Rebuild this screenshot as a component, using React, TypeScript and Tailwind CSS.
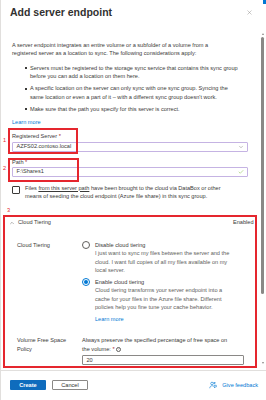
import { Check, ChevronDown, ChevronUp, X } from "lucide-react";

function RadioOption({
  checked,
  title,
  lines,
}: {
  checked?: boolean;
  title: string;
  lines: string[];
}) {
  return (
    <div className="flex gap-[5px]">
      <div
        className={
          checked
            ? "mt-[0.5px] w-[8px] h-[8px] shrink-0 rounded-full border border-[#0078d4] flex items-center justify-center"
            : "mt-[0.5px] w-[8px] h-[8px] shrink-0 rounded-full border border-[#605e5c]"
        }
      >
        {checked && <div className="w-[4px] h-[4px] rounded-full bg-[#0078d4]" />}
      </div>
      <div>
        <div>{title}</div>
        <div className="text-[#605e5c]">
          {lines.map((l, i) => (
            <div key={i}>{l}</div>
          ))}
        </div>
      </div>
    </div>
  );
}

export default function App() {
  return (
    <div className="relative w-[266px] h-[400px] bg-white border-l border-[#e1dfdd] font-['Liberation_Sans',sans-serif] text-[#3b3a39] text-[5.6px] leading-[8.5px] flex flex-col overflow-hidden">
      {/* bit of the portal edge */}
      <div className="absolute right-0 top-0 w-[3px] h-[4px] bg-[#0078d4]" />

      {/* Header */}
      <div className="h-[24px] shrink-0 flex items-start justify-between pl-[9px] pr-[13px] pt-[5px]">
        <h1 className="text-[10.5px] leading-[14px] font-semibold text-[#323130]">Add server endpoint</h1>
        <X className="w-[7px] h-[7px] mt-[3.5px] text-[#8a8886]" strokeWidth={1.5} />
      </div>

      {/* Scroll area */}
      <div className="flex h-[346px] shrink-0 overflow-hidden">
        <div className="flex-1 pl-[11px] pr-[11px] pt-[16.5px]">
          <p>
            A server endpoint integrates an entire volume or a subfolder of a volume from a
            <br />
            registered server as a location to sync. The following considerations apply:
          </p>

          <ul className="mt-[6px] flex flex-col gap-[3.5px]">
            <li className="flex gap-[3px] pl-[13px]">
              <span className="mt-[3.5px] w-[2px] h-[2px] shrink-0 bg-[#3b3a39]" />
              <span>
                Servers must be registered to the storage sync service that contains this sync group
                <br />
                before you can add a location on them here.
              </span>
            </li>
            <li className="flex gap-[3px] pl-[13px]">
              <span className="mt-[3.5px] w-[2px] h-[2px] shrink-0 bg-[#3b3a39]" />
              <span>
                A specific location on the server can only sync with one sync group. Syncing the
                <br />
                same location or even a part of it – with a different sync group doesn't work.
              </span>
            </li>
            <li className="flex gap-[3px] pl-[13px]">
              <span className="mt-[3.5px] w-[2px] h-[2px] shrink-0 bg-[#3b3a39]" />
              <span>Make sure that the path you specify for this server is correct.</span>
            </li>
          </ul>

          <div className="mt-[5px] text-[#0078d4]">Learn more</div>

          {/* Registered server */}
          <div className="relative mt-[5.5px]">
            <div>
              Registered Server <span className="text-[#a4262c]">*</span>
            </div>
            <div className="mt-[1px] h-[10px] border border-[#c5b3e3] rounded-[1px] flex items-center justify-between pl-[3.5px] pr-[3px]">
              <span>AZFS02.contoso.local</span>
              <ChevronDown className="w-[6px] h-[6px] text-[#605e5c]" strokeWidth={1.5} />
            </div>
            <div className="absolute left-[-4px] top-[-4px] w-[70px] h-[26px] border-2 border-[#e5262e]" />
            <div className="absolute left-[-9px] top-[4px] text-[#e5262e]">1</div>
          </div>

          {/* Path */}
          <div className="relative mt-[6px]">
            <div>
              Path <span className="text-[#a4262c]">*</span>
            </div>
            <div className="mt-[0.5px] h-[10px] border border-[#c5b3e3] rounded-[1px] flex items-center justify-between pl-[3.5px] pr-[3px]">
              <span>F:\Shares1</span>
              <Check className="w-[6px] h-[6px] text-[#57a300]" strokeWidth={1.5} />
            </div>
            <div className="absolute left-[-4px] top-[0px] w-[71px] h-[24px] border-2 border-[#e5262e]" />
            <div className="absolute left-[-9px] top-[6px] text-[#e5262e]">2</div>
          </div>

          {/* Checkbox */}
          <div className="mt-[7px] flex gap-[5px]">
            <div className="mt-[2px] w-[8px] h-[8px] shrink-0 border border-[#3b3a39] rounded-[1px]" />
            <div>
              Files <span className="underline">from this server path</span> have been brought to the cloud via DataBox or other
              <br />
              means of seeding the cloud endpoint (Azure file share) in this sync group.
            </div>
          </div>

          {/* Cloud tiering section */}
          <div className="relative mt-[14.5px] mx-[-9px] border-2 border-[#e5262e] pb-[1px]">
            <div className="absolute left-[2px] top-[-11px] text-[#e5262e]">3</div>

            <div className="h-[11px] flex items-center justify-between pl-[4px] pr-[1.5px]">
              <div className="flex items-center gap-[3px]">
                <ChevronUp className="w-[6px] h-[6px] text-[#3b3a39]" strokeWidth={1.5} />
                <span>Cloud Tiering</span>
              </div>
              <span>Enabled</span>
            </div>

            <div className="mt-[12.5px] pl-[12px] flex">
              <div className="w-[65px] shrink-0">Cloud Tiering</div>
              <div className="flex flex-col gap-[3px]">
                <RadioOption
                  title="Disable cloud tiering"
                  lines={[
                    "I just want to sync my files between the server and the",
                    "cloud. I want full copies of all my files available on my",
                    "local server.",
                  ]}
                />
                <RadioOption
                  checked
                  title="Enable cloud tiering"
                  lines={[
                    "Cloud tiering transforms your server endpoint into a",
                    "cache for your files in the Azure file share. Different",
                    "policies help you fine tune your cache behavior.",
                  ]}
                />
                <div className="pl-[13px] text-[#0078d4]">Learn more</div>
              </div>
            </div>

            <div className="mt-[12.5px] pl-[12px] pr-[11px] flex">
              <div className="w-[65px] shrink-0 leading-[9px]">
                Volume Free Space
                <br />
                Policy
              </div>
              <div className="flex-1">
                <div className="leading-[9px]">
                  Always preserve the specified percentage of free space on
                  <br />
                  the volume: <span className="text-[#a4262c]">*</span>{" "}
                  <span className="inline-flex w-[5px] h-[5px] rounded-full border-[0.7px] border-[#605e5c] text-[3.5px] leading-[4px] items-center justify-center align-middle text-[#605e5c]">
                    i
                  </span>
                </div>
                <div className="mt-[1.5px] h-[10px] border border-[#8a8886] rounded-[1px] flex items-center pl-[3.5px]">
                  20
                </div>
              </div>
            </div>
          </div>
        </div>

        {/* Scrollbar */}
        <div className="w-[7px] shrink-0 flex flex-col items-center pt-[9px] pb-[6px]">
          <div className="w-0 h-0 border-l-[1.5px] border-r-[1.5px] border-b-[2.5px] border-l-transparent border-r-transparent border-b-[#8a8886]" />
          <div className="mt-[2px] w-[3px] h-[257px] rounded-full bg-[#8a8886]" />
          <div className="flex-1" />
          <div className="w-0 h-0 border-l-[1.5px] border-r-[1.5px] border-t-[2.5px] border-l-transparent border-r-transparent border-t-[#8a8886]" />
        </div>
      </div>

      {/* Footer */}
      <div className="flex-1 border-t border-[#e1dfdd] flex items-start justify-between pl-[9px] pr-[8px] pt-[9px]">
        <div className="flex gap-[6px]">
          <button className="w-[36px] h-[10px] rounded-[1px] bg-[#0f6cbd] text-white font-semibold text-[5.6px] leading-[10px]">
            Create
          </button>
          <button className="w-[36px] h-[10px] rounded-[1px] border border-[#8a8886] bg-white text-[#323130] text-[5.6px] leading-[8px]">
            Cancel
          </button>
        </div>
        <div className="flex items-center gap-[5px] text-[#0078d4] mt-[1px]">
          <svg viewBox="0 0 16 16" className="w-[8px] h-[8px]" fill="none" stroke="#0078d4" strokeWidth="1.2">
            <circle cx="6" cy="5" r="2.6" />
            <path d="M1.5 14.5c0-3 2-5 4.5-5 1 0 1.8.3 2.5.8" />
            <path d="M10 8.5h4.5v3.5h-2l-1.5 1.5v-1.5h-1z" />
            <path d="M11 2l.5 1.2L12.7 3.7 11.5 4.2 11 5.4 10.5 4.2 9.3 3.7 10.5 3.2z" />
          </svg>
          <span>Give feedback</span>
        </div>
      </div>
    </div>
  );
}
